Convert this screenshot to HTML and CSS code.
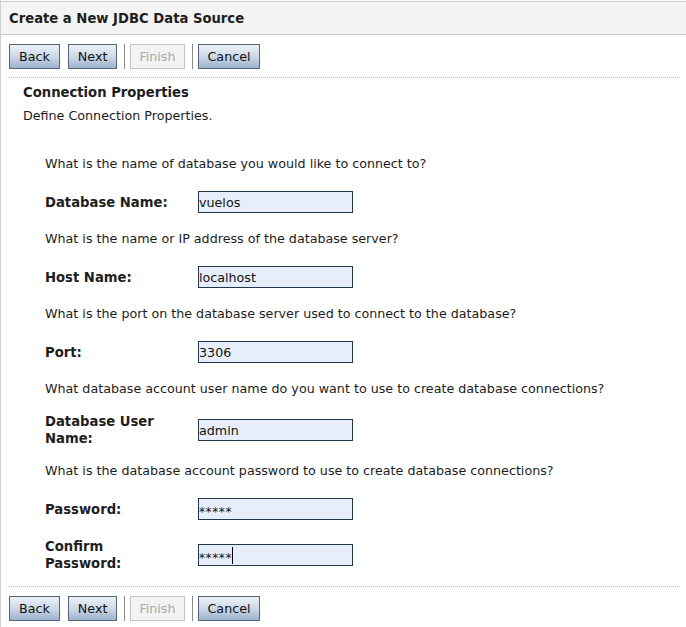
FILE: index.html
```html
<!DOCTYPE html>
<html>
<head>
<meta charset="utf-8">
<link rel="stylesheet" href="styles.css">
</head>
<body>
<div class="page">
  <div class="header"><h1 class="title">Create a New JDBC Data Source</h1></div>
  <div class="toolbar">
    <button class="btn">Back</button>
    <button class="btn">Next</button>
    <span class="sep"></span>
    <button class="btn disabled">Finish</button>
    <span class="sep"></span>
    <button class="btn">Cancel</button>
  </div>
  <div class="content">
    <h2 class="section-title">Connection Properties</h2>
    <p class="section-desc">Define Connection Properties.</p>
    <div class="form">
      <p class="question">What is the name of database you would like to connect to?</p>
      <div class="row"><label class="label">Database Name:</label><input class="field" value="vuelos"></div>
      <p class="question">What is the name or IP address of the database server?</p>
      <div class="row"><label class="label">Host Name:</label><input class="field" value="localhost"></div>
      <p class="question">What is the port on the database server used to connect to the database?</p>
      <div class="row"><label class="label">Port:</label><input class="field" value="3306"></div>
      <p class="question">What database account user name do you want to use to create database connections?</p>
      <div class="row two"><label class="label">Database User<br>Name:</label><input class="field" value="admin"></div>
      <p class="question">What is the database account password to use to create database connections?</p>
      <div class="row"><label class="label">Password:</label><span class="field pw">*****</span></div>
      <div class="row two last"><label class="label">Confirm<br>Password:</label><span class="field pw caret">*****</span></div>
    </div>
  </div>
  <div class="toolbar bottom">
    <button class="btn">Back</button>
    <button class="btn">Next</button>
    <span class="sep"></span>
    <button class="btn disabled">Finish</button>
    <span class="sep"></span>
    <button class="btn">Cancel</button>
  </div>
</div>
</body>
</html>
```
FILE: styles.css
```css
html, body {
  margin: 0;
  padding: 0;
  background: #fff;
}
body {
  font-family: "DejaVu Sans", sans-serif;
  font-size: 12.7px;
  color: #1c1c1c;
}
.page {
  border-left: 1px solid #d0d0d0;
  min-height: 627px;
  box-sizing: border-box;
  padding-top: 1px;
}
.header {
  background: #f4f4f4;
  border-top: 1px solid #c8c8c8;
  border-bottom: 1px solid #c8c8c8;
  height: 32px;
  display: flex;
  align-items: center;
  padding-left: 8px;
}
.title {
  margin: 0;
  font-size: 13.2px;
  font-weight: bold;
  color: #1e1e1e;
}
.toolbar {
  display: flex;
  align-items: center;
  margin: 9px 6px 0 8px;
  padding-bottom: 8px;
  border-bottom: 1px dotted #b8b8b8;
}
.toolbar.bottom {
  border-bottom: none;
  border-top: 1px dotted #b8b8b8;
  padding-top: 9px;
  margin-top: 0;
}
.btn {
  font-family: "DejaVu Sans", sans-serif;
  font-size: 12.7px;
  height: 25px;
  padding: 0 9px;
  margin-right: 8px;
  color: #111;
  border: 1px solid #56657a;
  background: linear-gradient(#edf2f8, #c9d6e6 55%, #9cb1cc);
}
.btn + .sep {
  margin-left: -1px;
}
.btn.disabled {
  color: #a8a8a8;
  border-color: #c4c4c4;
  background: #f3f3f3;
  padding: 0 8px;
}
.sep {
  width: 1px;
  height: 25px;
  background: #8a8a8a;
  margin-right: 5px;
}
.content {
  padding: 6px 0 0 22px;
}
.section-title {
  margin: 0;
  font-size: 13.2px;
  font-weight: bold;
  color: #1e1e1e;
  line-height: 18px;
}
.section-desc {
  margin: 5px 0 0;
  line-height: 18px;
}
.form {
  padding: 30px 0 0 22px;
}
.question {
  margin: 0;
  line-height: 18px;
}
.row {
  display: flex;
  align-items: center;
  margin: 18px 0 17px;
}
.row.two {
  margin: 15px 0 15px;
}
.row.last {
  margin: 18px 0 14px;
}
.label {
  width: 153px;
  font-weight: bold;
  font-size: 13.2px;
  line-height: 17px;
  color: #1e1e1e;
}
.field {
  box-sizing: border-box;
  width: 155px;
  height: 22px;
  border: 1px solid #233650;
  background: #e6eefb;
  font-family: "DejaVu Sans", sans-serif;
  font-size: 12.7px;
  padding: 0;
  color: #111;
  outline: none;
  display: flex;
  align-items: center;
}
.pw {
  font-size: 12px;
  letter-spacing: 0.6px;
  padding-top: 6px;
}
.caret::after {
  content: "";
  display: inline-block;
  width: 1px;
  height: 17px;
  background: #000;
  margin-left: 0;
  margin-top: -5px;
}
```
